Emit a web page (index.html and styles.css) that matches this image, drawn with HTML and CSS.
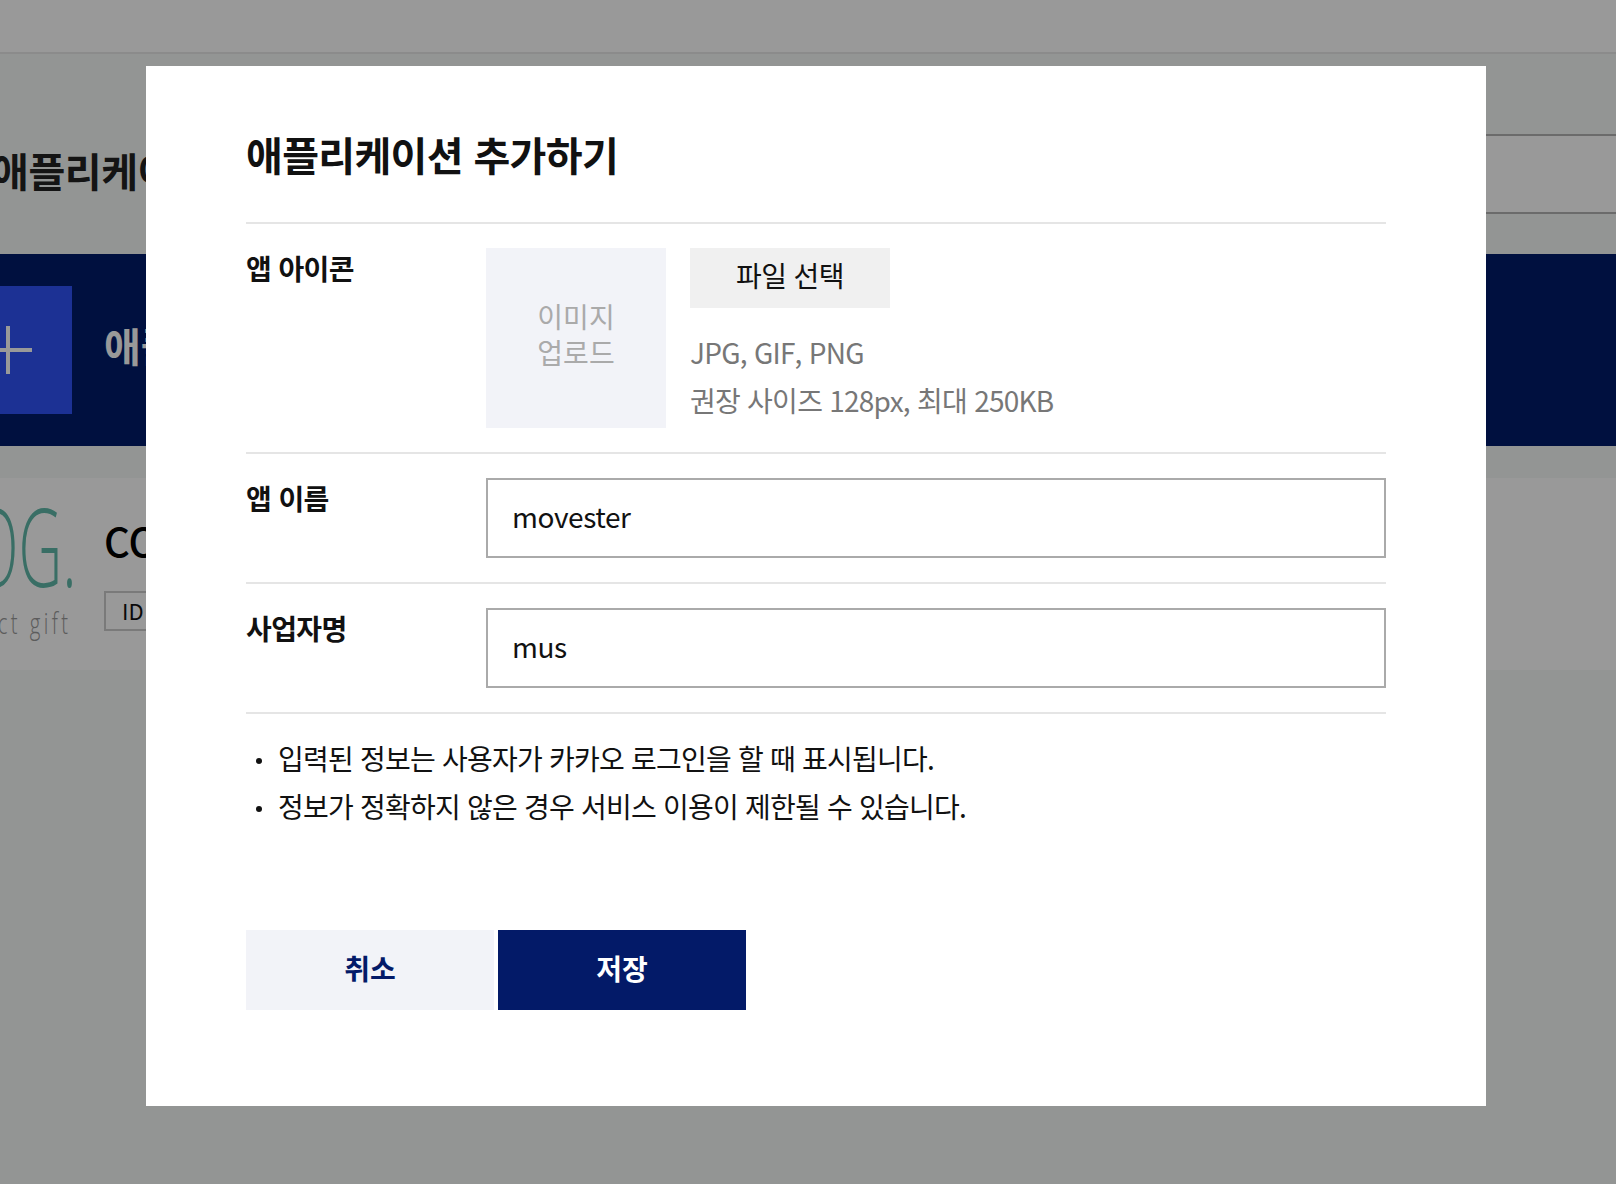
FILE: index.html
```html
<!DOCTYPE html>
<html lang="ko">
<head>
<meta charset="utf-8">
<title>애플리케이션 추가하기</title>
<link rel="stylesheet" href="styles.css">
</head>
<body>
<div class="page">
  <header class="topbar"></header>
  <section class="title-row">
    <h1 class="page-title">애플리케이션</h1>
    <div class="filter"></div>
  </section>
  <section class="add-band">
    <div class="add-box">
      <svg class="plus" viewBox="0 0 48 48" aria-hidden="true"><path d="M24 0V48M0 24H48"/></svg>
    </div>
    <span class="add-label">애플리케이션</span>
  </section>
  <section class="app-card">
    <div class="logo">
      <span class="logo-mark">DOG.</span>
      <span class="logo-sub">ct gift</span>
    </div>
    <div class="app-info">
      <div class="app-name">CO</div>
      <div class="app-id">ID</div>
    </div>
  </section>
</div>
<div class="overlay">
  <form class="modal">
    <h2 class="modal-title">애플리케이션 추가하기</h2>
    <div class="row">
      <div class="label">앱 아이콘</div>
      <div class="icon-field">
        <div class="upload">이미지<br>업로드</div>
        <div class="file-col">
          <button type="button" class="file-btn">파일 선택</button>
          <p class="hint">JPG, GIF, PNG<br>권장 사이즈 128px, 최대 250KB</p>
        </div>
      </div>
    </div>
    <div class="row">
      <label class="label" for="app-name">앱 이름</label>
      <input class="text-input" id="app-name" type="text" value="movester">
    </div>
    <div class="row">
      <label class="label" for="biz-name">사업자명</label>
      <input class="text-input" id="biz-name" type="text" value="mus">
    </div>
    <ul class="notes">
      <li>입력된 정보는 사용자가 카카오 로그인을 할 때 표시됩니다.</li>
      <li>정보가 정확하지 않은 경우 서비스 이용이 제한될 수 있습니다.</li>
    </ul>
    <div class="actions">
      <button type="button" class="btn btn-cancel">취소</button>
      <button type="button" class="btn btn-save">저장</button>
    </div>
  </form>
</div>
</body>
</html>
```
FILE: styles.css
```css
* { box-sizing: border-box; }
html, body { margin: 0; height: 100%; }
body {
  overflow: hidden;
  background: #f6f9f7;
  color: #111;
  font-family: "Noto Sans CJK KR", "Noto Sans", sans-serif;
  font-size: 28px;
}
.page { width: 1672px; margin-left: -56px; }
.topbar { height: 54px; background: #fff; border-bottom: 2px solid #e8e8e8; }
.title-row {
  height: 200px;
  padding: 40px 0 0 48px;
  display: flex;
  align-items: center;
  justify-content: space-between;
}
.page-title { margin: 0 0 8px; font-size: 40px; font-weight: 700; line-height: 60px; color: #222; letter-spacing: -.4px; }
.filter {
  width: 400px;
  height: 80px;
  background: #fff;
  border-top: 2px solid #b2b2b2;
  border-bottom: 2px solid #b2b2b2;
}
.add-band {
  height: 192px;
  background: #001b6a;
  display: flex;
  align-items: center;
  gap: 32px;
}
.add-box {
  width: 128px;
  height: 128px;
  background: #2f52f7;
  display: flex;
  align-items: center;
  justify-content: center;
}
.plus { width: 48px; height: 48px; fill: none; stroke: #fff; stroke-width: 4; }
.add-label { margin-bottom: 10px; font-size: 40px; font-weight: 700; color: #fff; }
.app-card {
  height: 192px;
  margin-top: 32px;
  background: #fff;
  display: flex;
  gap: 32px;
  align-items: center;
}
.logo { width: 128px; height: 192px; position: relative; overflow: hidden; }
.logo-mark {
  position: absolute;
  right: -5px;
  top: 3px;
  font-family: "Open Sans", sans-serif;
  font-weight: 300;
  font-size: 108px;
  line-height: 130px;
  color: #5fb8a8;
  transform: scaleX(.56);
  transform-origin: right center;
}
.logo-sub {
  position: absolute;
  right: 1px;
  top: 124px;
  font-family: "Open Sans", sans-serif;
  font-weight: 300;
  font-size: 30px;
  line-height: 42px;
  letter-spacing: 5px;
  color: #999;
  transform: scaleX(.68);
  transform-origin: right center;
  white-space: nowrap;
}
.app-name { font-size: 40px; font-weight: 500; line-height: 60px; color: #000; margin-top: -8px; }
.app-id {
  margin-top: 21px;
  width: 120px;
  height: 40px;
  border: 2px solid #ccc;
  padding-left: 16px;
  font-size: 22px;
  line-height: 34px;
  color: #111;
}
.overlay {
  position: fixed;
  inset: 0;
  padding: 66px 130px 0 146px;
  background: rgba(0, 0, 0, .4);
}
.modal {
  display: block;
  width: 1340px;
  height: 1040px;
  padding: 58px 100px 96px;
  background: #fff;
}
.modal-title { margin: 0 0 38px; font-size: 40px; font-weight: 700; line-height: 60px; color: #111; letter-spacing: -.65px; }
.row {
  display: flex;
  padding: 24px 0;
  border-top: 2px solid #e5e5e5;
}
.label {
  flex: 0 0 240px;
  margin-top: -1px;
  font-size: 28px;
  font-weight: 700;
  line-height: 42px;
  color: #111;
  letter-spacing: -.6px;
}
.icon-field { display: flex; gap: 24px; }
.upload {
  width: 180px;
  height: 180px;
  padding-bottom: 8px;
  background: #f2f3f8;
  color: #aaa;
  font-size: 28px;
  line-height: 36px;
  display: flex;
  align-items: center;
  justify-content: center;
  text-align: center;
}
.file-btn {
  display: block;
  width: 200px;
  height: 60px;
  padding: 0 0 6px;
  border: 0;
  background: #f0f0f0;
  color: #111;
  font: inherit;
  letter-spacing: -.6px;
}
.hint { margin: 20px 0 0; font-size: 28px; line-height: 48px; color: #777; letter-spacing: -.75px; }
.text-input {
  flex: 1;
  min-width: 0;
  height: 80px;
  padding: 0 24px 4px;
  border: 2px solid #aaa;
  border-radius: 0;
  outline: 0;
  background: #fff;
  color: #111;
  font: inherit;
  letter-spacing: -.4px;
}
.notes {
  list-style: none;
  margin: 0;
  padding: 20px 0 0;
  border-top: 2px solid #e5e5e5;
  font-size: 28px;
  line-height: 48px;
  color: #111;
  letter-spacing: -.78px;
}
.notes li { position: relative; padding-left: 32px; }
.notes li::before {
  content: "";
  position: absolute;
  left: 10px;
  top: 24px;
  width: 6px;
  height: 6px;
  border-radius: 50%;
  background: #111;
}
.actions { display: flex; gap: 4px; margin-top: 100px; }
.btn {
  width: 248px;
  height: 80px;
  padding: 0 0 4px;
  border: 0;
  font: inherit;
  font-weight: 700;
}
.btn-cancel { background: #f2f3f8; color: #031a68; }
.btn-save { background: #031a68; color: #fff; }
```
